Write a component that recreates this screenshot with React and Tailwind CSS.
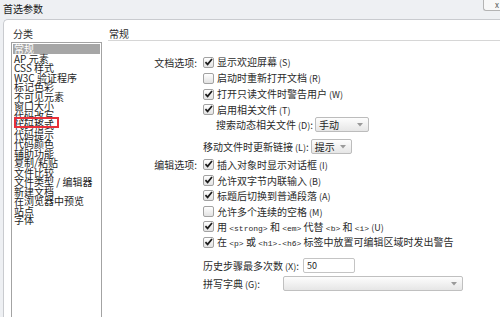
import React from 'react';

const cats = [
  '常规', 'AP 元素', 'CSS 样式', 'W3C 验证程序', '标记色彩', '不可见元素', '窗口大小',
  '代码改写', '代码格式', '代码提示', '代码颜色', '辅助功能', '复制/粘贴', '文件比较',
  '文件类型 / 编辑器', '新建文档', '在浏览器中预览', '站点', '字体',
];

function Check({ on }) {
  return (
    <span className="flex h-[11px] w-[11px] shrink-0 items-center justify-center rounded-[2px] border border-[#a2a2a2] bg-linear-to-b from-white to-[#e2e2e2]">
      {on && (
        <svg width="10" height="10" viewBox="0 0 10 10" className="-mt-[1px]">
          <path d="M1.6 5.1 L4 7.6 L8.9 1.6" fill="none" stroke="#1c1c1c" strokeWidth="1.9" />
        </svg>
      )}
    </span>
  );
}

function Arrow() {
  return (
    <svg width="6" height="4" viewBox="0 0 6 4">
      <path d="M0 0 L6 0 L3 3.5 Z" fill="#9a9a9a" />
    </svg>
  );
}

function Drop({ value, w }) {
  return (
    <div className={`flex h-[15px] items-center justify-between rounded-[2px] border border-[#bcbcbc] bg-linear-to-b from-[#fdfdfd] to-[#e6e6e6] pl-[3px] pr-[5px] ${w}`}>
      <span className="text-[10px] leading-none text-[#222]">{value}</span>
      <Arrow />
    </div>
  );
}

function Tag({ children }) {
  return <span className="font-['Liberation_Mono',monospace] text-[8px]">{children}</span>;
}

function Row({ label, on, h = 'h-[16px]', children }) {
  return (
    <div className={`flex items-center ${h}`}>
      <div className="w-[90px] shrink-0 pr-[1px] text-right">{label}</div>
      <div className="ml-[5px] flex items-center">
        <Check on={on} />
        <span className="ml-[3px] whitespace-nowrap">{children}</span>
      </div>
    </div>
  );
}

function Key({ k }) {
  return <span className="text-[9px]"> ({k})</span>;
}

export default function App() {
  return (
    <div className="flex h-[317px] w-[500px] flex-col overflow-hidden bg-[#eef0f3] font-['Noto_Sans_CJK_SC',sans-serif] text-[10px] text-[#2b2b2b]">
      <div className="flex h-[19px] shrink-0 items-start justify-between">
        <span className="ml-[3px] mt-[3px] leading-[11px] text-[#1a1a1a]">首选参数</span>
        <div className="flex h-[11px] w-[17px] items-start rounded-bl-[3px] border-b border-l border-[#b4b4b4] bg-[#f8f8f8] pl-[11px] text-[8px] leading-[9px] text-[#555]">
          x
        </div>
      </div>

      <div className="ml-[3px] flex min-h-0 flex-1 rounded-tl-[5px] border-l border-t border-[#c9cbcf] bg-white">
        <div className="ml-[7px] flex w-[91px] shrink-0 flex-col">
          <div className="mt-[8px] h-[13px] pl-[2px] leading-[12px]">分类</div>
          <div className="relative mt-[1px] flex-1 border-x border-t border-[#a3a3a3] p-[1px]">
            {cats.map((c, i) => (
              <div
                key={c}
                className={`h-[9.5px] whitespace-nowrap pl-[1px] leading-[9.5px] ${i === 0 ? 'bg-[#a6a6a6] text-white' : 'text-[#1e1e1e]'}`}
              >
                {c}
              </div>
            ))}
            <div className="absolute left-[2px] top-[74px] h-[11px] w-[45px] border-2 border-[#e8313a]" />
          </div>
        </div>

        <div className="ml-[6px] flex min-w-0 flex-1 flex-col">
          <div className="mt-[8px] h-[13px] border-b border-[#d6d6d6] pl-[1px] leading-[12px]">常规</div>

          <div className="mt-[13px] flex flex-col">
            <Row label="文档选项:" on>显示欢迎屏幕<Key k="S" /></Row>
            <Row on={false}>启动时重新打开文档<Key k="R" /></Row>
            <Row on>打开只读文件时警告用户<Key k="W" /></Row>
            <Row on h="h-[15px]">启用相关文件<Key k="T" /></Row>
            <div className="flex h-[15px] items-center pl-[108px]">
              <span className="mr-[2px] whitespace-nowrap">搜索动态相关文件<Key k="D" />:</span>
              <Drop value="手动" w="w-[54px]" />
            </div>
            <div className="mt-[7px] flex h-[15px] items-center pl-[95px]">
              <span className="mr-[2px] whitespace-nowrap">移动文件时更新链接<Key k="L" />:</span>
              <Drop value="提示" w="w-[41px]" />
            </div>

            <div className="mt-[3px] flex flex-col">
              <Row label="编辑选项:" on h="h-[15.5px]">插入对象时显示对话框<Key k="I" /></Row>
              <Row on h="h-[15.5px]">允许双字节内联输入<Key k="B" /></Row>
              <Row on h="h-[15.5px]">标题后切换到普通段落<Key k="A" /></Row>
              <Row on={false} h="h-[15.5px]">允许多个连续的空格<Key k="M" /></Row>
              <Row on h="h-[15.5px]">
                用 <Tag>&lt;strong&gt;</Tag> 和 <Tag>&lt;em&gt;</Tag> 代替 <Tag>&lt;b&gt;</Tag> 和 <Tag>&lt;i&gt;</Tag><Key k="U" />
              </Row>
              <Row on h="h-[15.5px]">
                在 <Tag>&lt;p&gt;</Tag> 或 <Tag>&lt;h1&gt;-&lt;h6&gt;</Tag> 标签中放置可编辑区域时发出警告
              </Row>
            </div>

            <div className="mt-[8px] flex h-[15px] items-center pl-[95px]">
              <span className="w-[100px] shrink-0 whitespace-nowrap">历史步骤最多次数<Key k="X" />:</span>
              <div className="flex h-[15px] w-[52px] items-center rounded-[2px] border border-[#c4c4c4] bg-white pl-[3px] text-[9px] leading-none text-[#222]">
                50
              </div>
            </div>
            <div className="mt-[3px] flex h-[15px] items-center pl-[95px]">
              <span className="w-[80px] shrink-0 whitespace-nowrap">拼写字典<Key k="G" />:</span>
              <div className="flex h-[15px] w-[180px] items-center justify-end rounded-[2px] border border-[#c0c0c0] bg-linear-to-b from-[#fdfdfd] to-[#e6e6e6] pr-[5px]">
                <Arrow />
              </div>
            </div>
          </div>
        </div>
      </div>
    </div>
  );
}
